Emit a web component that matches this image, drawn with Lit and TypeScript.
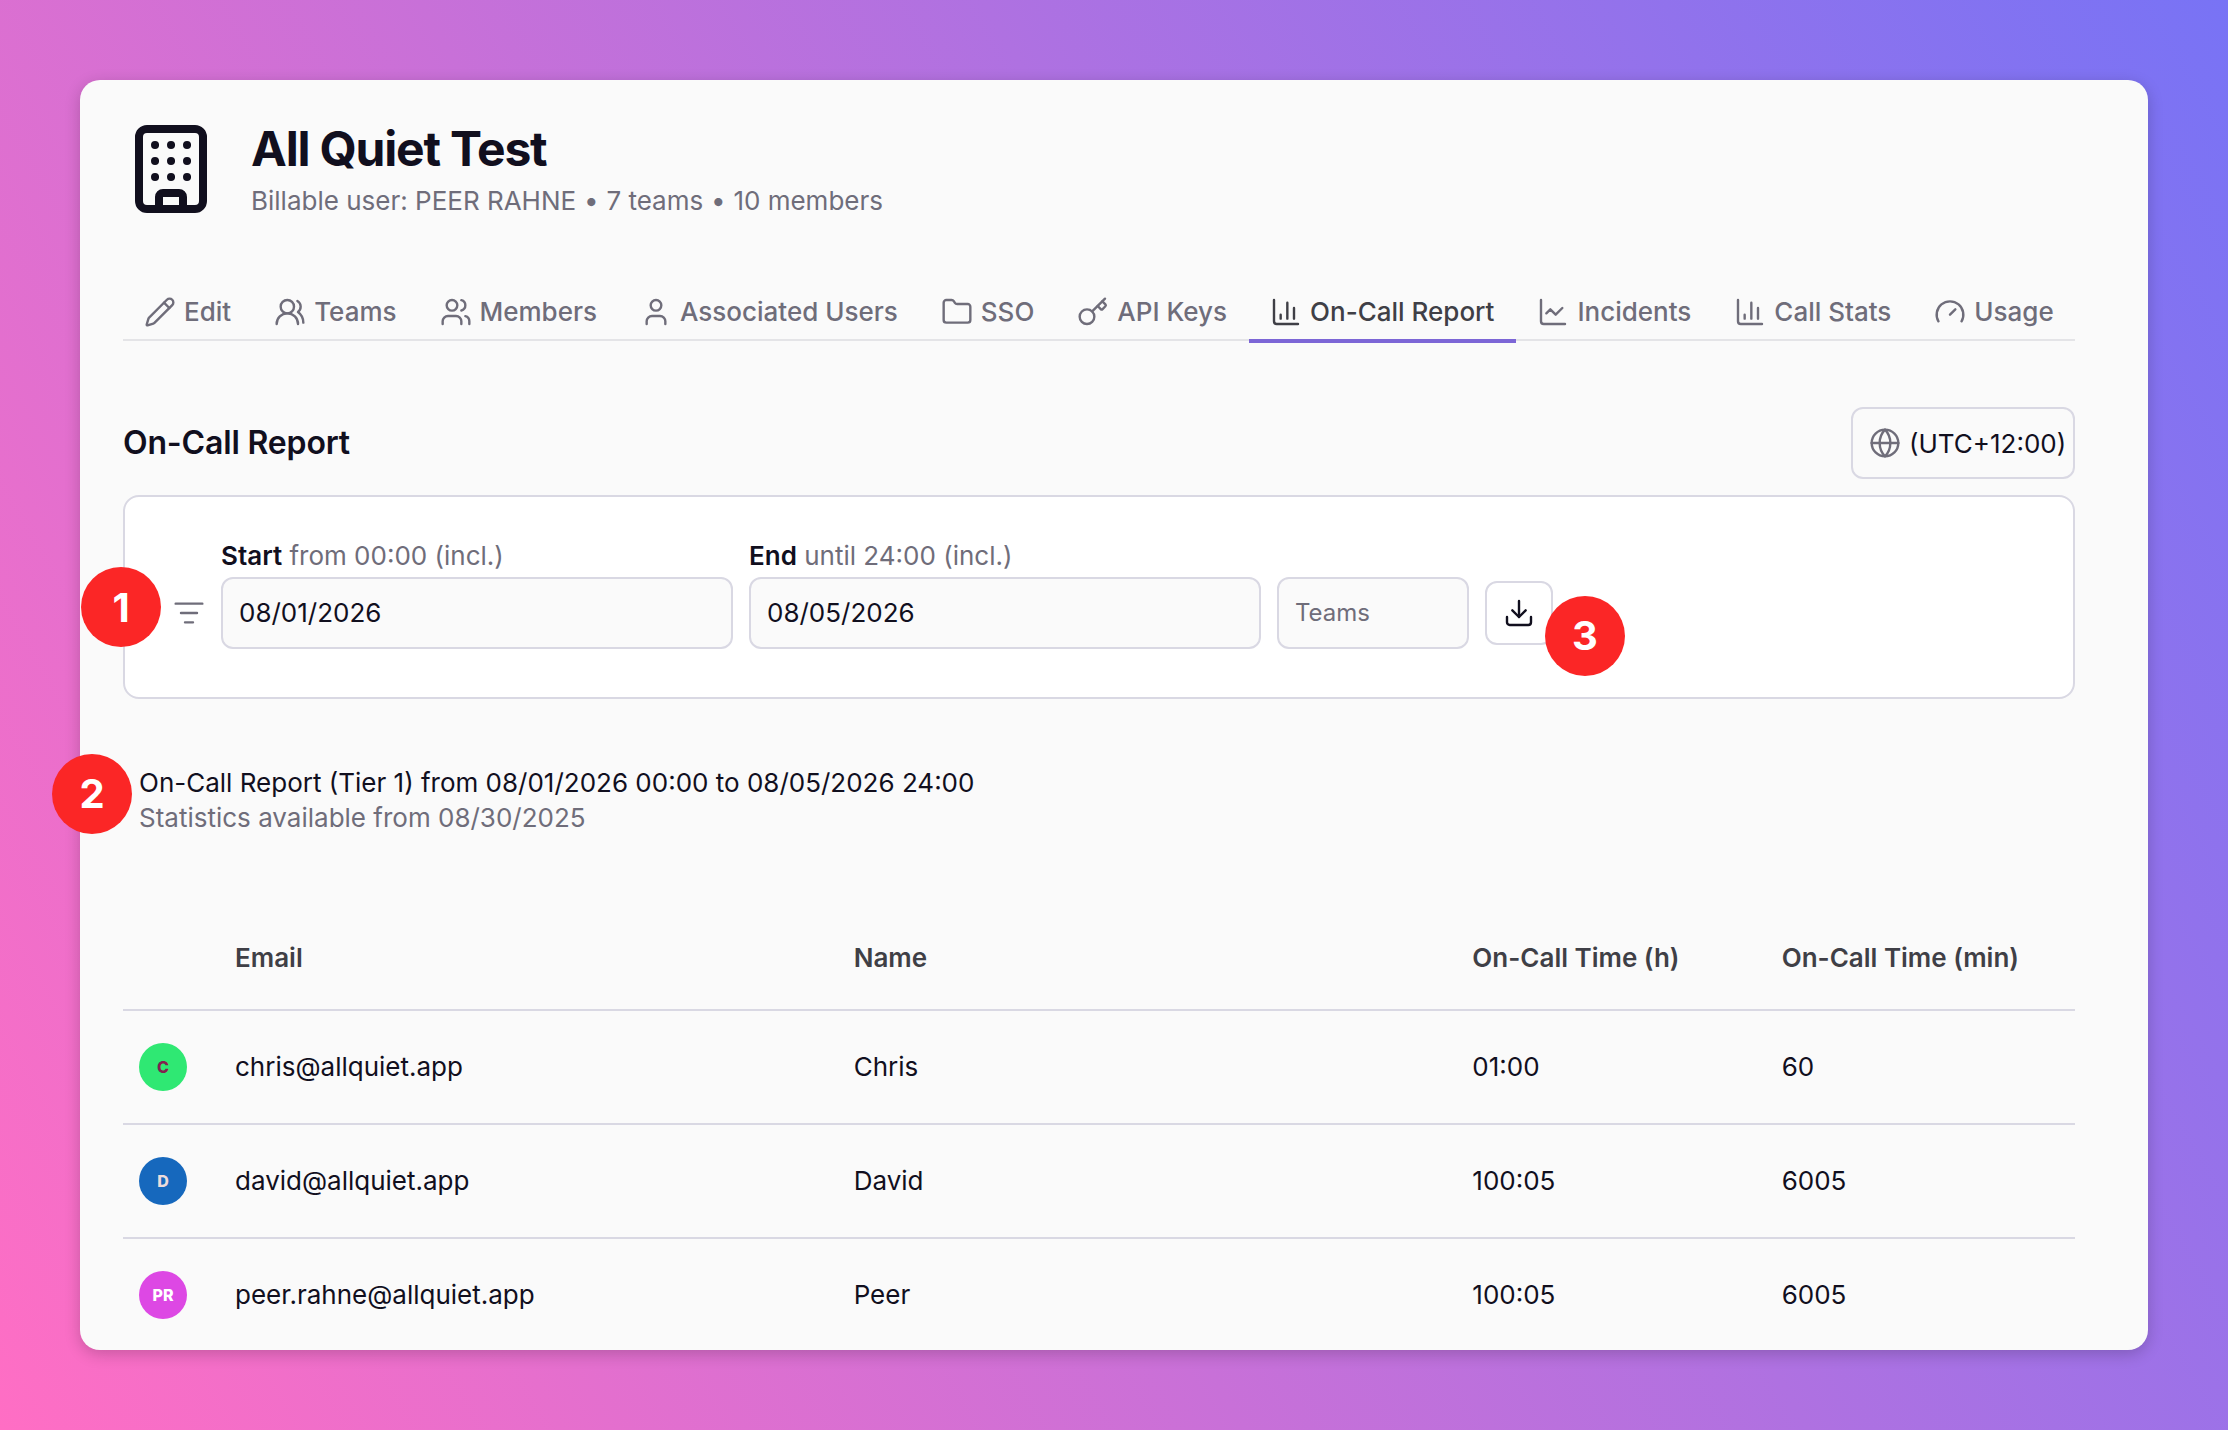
import { css, html, LitElement, svg, SVGTemplateResult } from 'lit';
import { customElement, property } from 'lit/decorators.js';
import { classMap } from 'lit/directives/class-map.js';

const icons: Record<string, SVGTemplateResult> = {
  building: svg`<rect width="16" height="20" x="4" y="2" rx="2" ry="2" />
    <path d="M9 22v-3a1 1 0 0 1 1-1h4a1 1 0 0 1 1 1v3M8 6h.01M16 6h.01M12 6h.01M12 10h.01M12 14h.01M16 10h.01M16 14h.01M8 10h.01M8 14h.01" />`,
  pencil: svg`<path d="M21.174 6.812a1 1 0 0 0-3.986-3.987L3.842 16.174a2 2 0 0 0-.5.83l-1.321 4.352a.5.5 0 0 0 .623.622l4.353-1.32a2 2 0 0 0 .83-.497z" />
    <path d="m15 5 4 4" />`,
  teams: svg`<path d="M18 21a8 8 0 0 0-16 0" />
    <circle cx="10" cy="8" r="5" />
    <path d="M22 20c0-3.37-2-6.5-4-8a5 5 0 0 0-.45-8.3" />`,
  members: svg`<path d="M16 21v-2a4 4 0 0 0-4-4H6a4 4 0 0 0-4 4v2" />
    <circle cx="9" cy="7" r="4" />
    <path d="M22 21v-2a4 4 0 0 0-3-3.87" />
    <path d="M16 3.13a4 4 0 0 1 0 7.75" />`,
  user: svg`<path d="M19 21v-2a4 4 0 0 0-4-4H9a4 4 0 0 0-4 4v2" />
    <circle cx="12" cy="7" r="4" />`,
  folder: svg`<path d="M20 20a2 2 0 0 0 2-2V8a2 2 0 0 0-2-2h-7.9a2 2 0 0 1-1.69-.9L9.6 3.9A2 2 0 0 0 7.93 3H4a2 2 0 0 0-2 2v13a2 2 0 0 0 2 2Z" />`,
  key: svg`<path d="m15.5 7.5 2.3 2.3a1 1 0 0 0 1.4 0l2.1-2.1a1 1 0 0 0 0-1.4L19 4" />
    <path d="m21 2-9.6 9.6" />
    <circle cx="7.5" cy="15.5" r="5.5" />`,
  columns: svg`<path d="M3 3v16a2 2 0 0 0 2 2h16M18 17V9M13 17V5M8 17v-3" />`,
  line: svg`<path d="M3 3v16a2 2 0 0 0 2 2h16" />
    <path d="m19 9-5 5-4-4-3 3" />`,
  gauge: svg`<path d="m12 14 4-4" />
    <path d="M3.34 19a10 10 0 1 1 17.32 0" />`,
  globe: svg`<circle cx="12" cy="12" r="10" />
    <path d="M12 2a14.5 14.5 0 0 0 0 20 14.5 14.5 0 0 0 0-20" />
    <path d="M2 12h20" />`,
  filter: svg`<path d="M2 5h20M6 12h12M9 19h6" />`,
  download: svg`<path d="M12 15V3" />
    <path d="M21 15v4a2 2 0 0 1-2 2H5a2 2 0 0 1-2-2v-4" />
    <path d="m7 10 5 5 5-5" />`,
};

const tabs = [
  { icon: 'pencil', label: 'Edit' },
  { icon: 'teams', label: 'Teams' },
  { icon: 'members', label: 'Members' },
  { icon: 'user', label: 'Associated Users' },
  { icon: 'folder', label: 'SSO' },
  { icon: 'key', label: 'API Keys' },
  { icon: 'columns', label: 'On-Call Report', active: true },
  { icon: 'line', label: 'Incidents' },
  { icon: 'columns', label: 'Call Stats' },
  { icon: 'gauge', label: 'Usage' },
];

const rows = [
  {
    initials: 'C',
    avatar: 'green',
    email: 'chris@allquiet.app',
    name: 'Chris',
    hours: '01:00',
    minutes: '60',
  },
  {
    initials: 'D',
    avatar: 'blue',
    email: 'david@allquiet.app',
    name: 'David',
    hours: '100:05',
    minutes: '6005',
  },
  {
    initials: 'PR',
    avatar: 'pink',
    email: 'peer.rahne@allquiet.app',
    name: 'Peer',
    hours: '100:05',
    minutes: '6005',
  },
];

@customElement('x-icon')
export class Icon extends LitElement {
  @property() name = '';

  static override styles = css`
    :host {
      display: block;
      flex: none;
      width: 32px;
      height: 32px;
    }

    svg {
      display: block;
      width: 100%;
      height: 100%;
      fill: none;
      stroke: currentColor;
      stroke-width: var(--icon-stroke, 1.8);
      stroke-linecap: round;
      stroke-linejoin: round;
    }
  `;

  protected override render() {
    return html`<svg viewBox="0 0 24 24">${icons[this.name]}</svg>`;
  }
}

@customElement('x-tabs')
export class Tabs extends LitElement {
  static override styles = css`
    .tabs {
      display: flex;
      align-items: flex-start;
      height: 54px;
      border-bottom: 2px solid #e4e4e7;
      color: #6f6d7a;
      font-weight: 500;
    }

    .tab {
      display: flex;
      align-items: center;
      gap: 8px;
      box-sizing: border-box;
      height: 54px;
      padding: 0 22px 0 21px;
      white-space: nowrap;
    }

    .active {
      height: 58px;
      border-bottom: 4px solid #7c66d6;
      color: #3f3f46;
    }
  `;

  protected override render() {
    return html`<div class="tabs">
      ${tabs.map(
        (tab) =>
          html`<div class=${classMap({ tab: true, active: !!tab.active })}>
            <x-icon name=${tab.icon}></x-icon>
            <span>${tab.label}</span>
          </div>`
      )}
    </div>`;
  }
}

@customElement('x-report-table')
export class ReportTable extends LitElement {
  static override styles = css`
    .row {
      display: grid;
      grid-template-columns: 96px 2fr 2fr 1fr 1fr;
      align-items: center;
      height: 112px;
      border-top: 2px solid #d9d8e3;
    }

    .head {
      box-sizing: border-box;
      height: 104px;
      padding-top: 2px;
      border-top: none;
      color: #3f3f46;
      font-weight: 600;
    }

    .cell {
      padding: 0 16px;
      white-space: nowrap;
    }

    .avatar {
      display: flex;
      align-items: center;
      justify-content: center;
      width: 48px;
      height: 48px;
      border-radius: 50%;
      font-size: 16px;
      font-weight: 800;
    }

    .green {
      background: #2fe873;
      color: #84204f;
    }

    .blue {
      background: #1668bd;
      color: #ecdcdc;
    }

    .pink {
      background: #dd48e4;
      color: #fff;
    }
  `;

  protected override render() {
    return html`<div>
      <div class="row head">
        <div class="cell"></div>
        <div class="cell">Email</div>
        <div class="cell">Name</div>
        <div class="cell">On-Call Time (h)</div>
        <div class="cell">On-Call Time (min)</div>
      </div>
      ${rows.map(
        (row) =>
          html`<div class="row">
            <div class="cell">
              <div class="avatar ${row.avatar}">${row.initials}</div>
            </div>
            <div class="cell">${row.email}</div>
            <div class="cell">${row.name}</div>
            <div class="cell">${row.hours}</div>
            <div class="cell">${row.minutes}</div>
          </div>`
      )}
    </div>`;
  }
}

@customElement('app-root')
export class AppRoot extends LitElement {
  static override styles = css`
    :host {
      display: block;
      box-sizing: border-box;
      position: relative;
      width: 2228px;
      height: 1430px;
      padding: 80px;
      overflow: hidden;
      background: linear-gradient(60deg, #ff6ec4, #7873f5);
      color: #110f1e;
      font-family: Inter, 'Liberation Sans', sans-serif;
      font-size: 26px;
      line-height: 36px;
    }

    .card {
      box-sizing: border-box;
      height: 1270px;
      padding: 41px 73px 0 43px;
      overflow: hidden;
      border-radius: 20px;
      background: #fafafa;
      box-shadow: 0 4px 16px rgba(0, 0, 0, 0.2);
    }

    .header {
      display: flex;
      gap: 32px;
      height: 96px;
    }

    .logo {
      --icon-stroke: 2;
      width: 96px;
      height: 96px;
    }

    h1 {
      margin: 0 0 6px;
      font-size: 48px;
      font-weight: 700;
      line-height: 56px;
      letter-spacing: -0.025em;
    }

    .muted {
      color: #6f6d7a;
    }

    .dot {
      margin: 0 1.25px;
      font-weight: 600;
    }

    x-tabs {
      display: block;
      margin-top: 68px;
    }

    .title {
      display: flex;
      align-items: center;
      justify-content: space-between;
      margin-top: 66px;
    }

    h2 {
      margin: 0;
      font-size: 32px;
      font-weight: 600;
      letter-spacing: -0.005em;
    }

    .zone {
      display: flex;
      align-items: center;
      gap: 8px;
      box-sizing: border-box;
      width: 224px;
      height: 72px;
      padding-left: 16px;
      border: 2px solid #d9d8e3;
      border-radius: 12px;
      white-space: nowrap;
    }

    .zone x-icon {
      color: #6f6d7a;
    }

    .zone span {
      padding-top: 2px;
    }

    .filters {
      display: flex;
      align-items: flex-end;
      gap: 16px;
      box-sizing: border-box;
      height: 204px;
      margin-top: 16px;
      padding: 0 48px 48px;
      border: 2px solid #d9d8e3;
      border-radius: 16px;
      background: #fff;
    }

    .filters > .muted {
      margin-bottom: 20px;
    }

    .label {
      margin-bottom: 3px;
    }

    .label b {
      font-weight: 600;
    }

    .input {
      display: flex;
      align-items: center;
      box-sizing: border-box;
      width: 512px;
      height: 72px;
      padding: 0 16px;
      border: 2px solid #d9d8e3;
      border-radius: 12px;
      background: #fafafa;
    }

    .select {
      width: 192px;
      color: #6f6d7a;
      font-size: 24px;
    }

    .button {
      display: flex;
      align-items: center;
      justify-content: center;
      box-sizing: border-box;
      width: 68px;
      height: 64px;
      margin-bottom: 4px;
      border: 2px solid #d9d8e3;
      border-radius: 12px;
    }

    .summary {
      margin: 66px 0 0 16px;
      line-height: 35px;
    }

    x-report-table {
      display: block;
      margin-top: 70px;
    }

    .marker {
      position: absolute;
      display: flex;
      align-items: center;
      justify-content: center;
      box-sizing: border-box;
      width: 80px;
      height: 80px;
      padding-top: 1px;
      border-radius: 50%;
      background: #fb2626;
      color: #fff;
      font-size: 40px;
      font-weight: 700;
    }

    .filter-marker {
      left: 81px;
      top: 567px;
    }

    .summary-marker {
      left: 52px;
      top: 753.5px;
    }

    .download-marker {
      left: 1545px;
      top: 595.5px;
    }
  `;

  protected override render() {
    return html`<div class="card">
        <div class="header">
          <x-icon class="logo" name="building"></x-icon>
          <div>
            <h1>All Quiet Test</h1>
            <div class="muted">
              Billable user: PEER RAHNE <span class="dot">•</span> 7 teams
              <span class="dot">•</span> 10 members
            </div>
          </div>
        </div>
        <x-tabs></x-tabs>
        <div class="title">
          <h2>On-Call Report</h2>
          <div class="zone">
            <x-icon name="globe"></x-icon>
            <span>(UTC+12:00)</span>
          </div>
        </div>
        <div class="filters">
          <x-icon class="muted" name="filter"></x-icon>
          <div>
            <div class="label">
              <b>Start</b> <span class="muted">from 00:00 (incl.)</span>
            </div>
            <div class="input">08/01/2026</div>
          </div>
          <div>
            <div class="label">
              <b>End</b> <span class="muted">until 24:00 (incl.)</span>
            </div>
            <div class="input">08/05/2026</div>
          </div>
          <div class="input select">Teams</div>
          <div class="button"><x-icon name="download"></x-icon></div>
        </div>
        <div class="summary">
          <div>
            On-Call Report (Tier 1) from 08/01/2026 00:00 to 08/05/2026 24:00
          </div>
          <div class="muted">Statistics available from 08/30/2025</div>
        </div>
        <x-report-table></x-report-table>
      </div>
      <div class="marker filter-marker">1</div>
      <div class="marker summary-marker">2</div>
      <div class="marker download-marker">3</div>`;
  }
}
